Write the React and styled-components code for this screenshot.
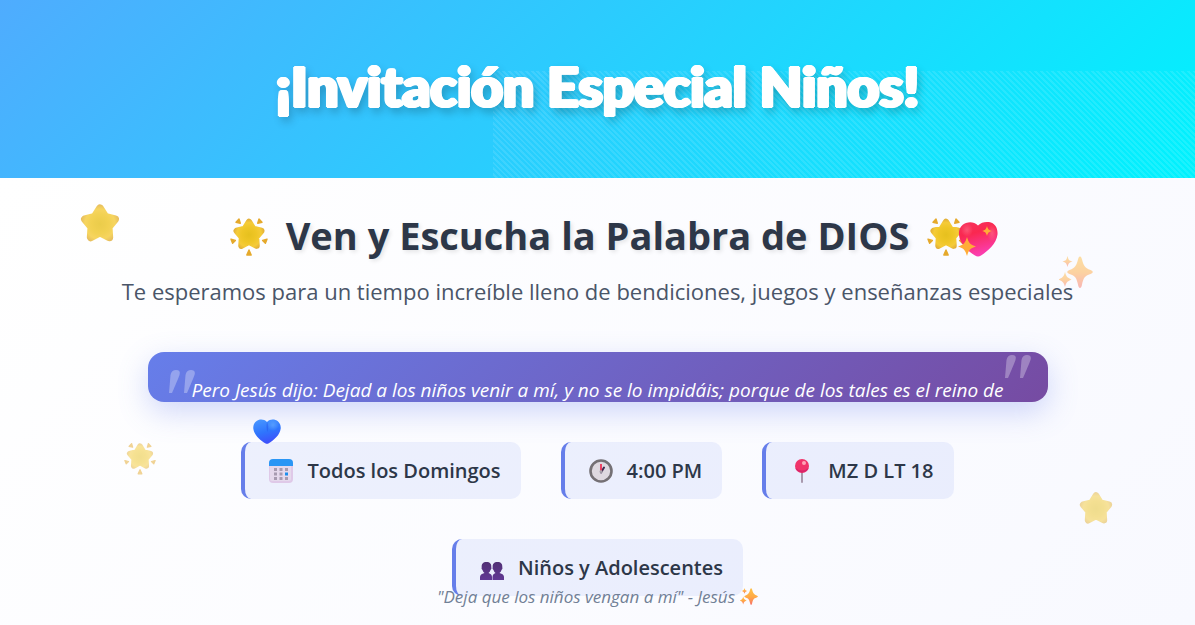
import React from "react";
import styled, { createGlobalStyle } from "styled-components";

const GlobalStyle = createGlobalStyle`
  *, *::before, *::after { box-sizing: border-box; }
  body {
    margin: 0;
    font-family: "Open Sans", "Noto Sans", sans-serif;
    color: #2d3748;
  }
  h1, h2, p, ul, blockquote { margin: 0; padding: 0; }
  svg { display: block; }
`;

const Page = styled.div`
  min-height: 100vh;
  display: flex;
  flex-direction: column;
  overflow: hidden;
`;

const Header = styled.header`
  position: relative;
  overflow: hidden;
  padding: 46px 32px 52px;
  text-align: center;
  background: linear-gradient(135deg, #4facfe 0%, #00f2fe 100%);

  &::before {
    content: "";
    position: absolute;
    inset: 40% 0 0 41.25%;
    background: repeating-linear-gradient(
      45deg,
      transparent,
      transparent 2px,
      rgba(255, 255, 255, 0.1) 2px,
      rgba(255, 255, 255, 0.1) 4px
    );
  }
`;

const Title = styled.h1`
  position: relative;
  font-family: Lato, "Open Sans", sans-serif;
  font-size: 55px;
  line-height: 80px;
  font-weight: 900;
  color: #fff;
  text-shadow:
    2px 0 #fff, -2px 0 #fff, 0 1px #fff, 0 -1px #fff,
    1px 1px #fff, -1px -1px #fff, 1px -1px #fff, -1px 1px #fff,
    3px 5px 10px rgba(0, 0, 0, 0.3);
`;

const Content = styled.main`
  position: relative;
  flex: 1;
  padding: 30px 40px 29px;
  text-align: center;
  background: linear-gradient(135deg, #ffffff 0%, #f8f9ff 100%);
`;

const Heading = styled.h2`
  display: flex;
  justify-content: center;
  align-items: center;
  gap: 18px;
  font-size: 38px;
  line-height: 54px;
  font-weight: 700;
  text-shadow: 2px 2px 4px rgba(0, 0, 0, 0.1);
`;

const Subtitle = styled.p`
  margin-top: 13px;
  font-size: 22px;
  line-height: 32px;
  color: #4a5568;
`;

const Verse = styled.blockquote`
  position: relative;
  max-width: 900px;
  height: 50px;
  margin: 45px auto 40px;
  border-radius: 16px;
  background: linear-gradient(135deg, #667eea 0%, #764ba2 100%);
  box-shadow: 0 10px 30px rgba(102, 126, 234, 0.3);
`;

const VerseText = styled.p`
  height: 50px;
  padding: 23px 40px 0;
  overflow: hidden;
  font-size: 19px;
  line-height: 30px;
  font-style: italic;
  color: #fff;
`;

const QuoteMark = styled.svg`
  position: absolute;
  fill: rgba(255, 255, 255, 0.3);
  ${(p) => (p.$closing ? "top: 3px; right: 17px;" : "top: 18px; left: 21px;")}
`;

const Details = styled.ul`
  display: flex;
  flex-wrap: wrap;
  justify-content: center;
  gap: 40px;
  max-width: 900px;
  margin: 0 auto;
  list-style: none;
`;

const Detail = styled.li`
  display: flex;
  align-items: center;
  gap: 14px;
  padding: 12px 20px 12px 24px;
  border-left: 4px solid #667eea;
  border-radius: 10px;
  background: rgba(102, 126, 234, 0.1);
  font-size: 20px;
  line-height: 33px;
  font-weight: 600;
`;

const Closing = styled.p`
  position: absolute;
  left: 0;
  right: 0;
  bottom: 16px;
  display: flex;
  justify-content: center;
  align-items: center;
  gap: 5px;
  font-size: 17px;
  line-height: 24px;
  font-style: italic;
  color: #718096;
`;

const Floating = styled.span`
  position: absolute;
  left: ${(p) => p.$left};
  top: ${(p) => p.$top};
  opacity: ${(p) => p.$opacity};
`;

const STAR = "M20 6 25 14 34.3 16.4 28.2 23.7 28.8 33.6 20 29 11.2 33.6 11.8 23.7 5.7 16.4 15 14Z";

function StarShape({ id }) {
  return (
    <>
      <defs>
        <radialGradient id={id} gradientUnits="userSpaceOnUse" cx="20" cy="21" r="19">
          <stop offset="0" stopColor="#e6c01e" />
          <stop offset="0.45" stopColor="#efc626" />
          <stop offset="0.75" stopColor="#f5cb38" />
          <stop offset="1" stopColor="#dfab38" />
        </radialGradient>
      </defs>
      <path d={STAR} fill={`url(#${id})`} stroke={`url(#${id})`} strokeWidth="7.4" strokeLinejoin="round" />
    </>
  );
}

function Star({ id, size }) {
  return (
    <svg width={size} height={size} viewBox="1 1 38 38" aria-hidden="true">
      <StarShape id={id} />
    </svg>
  );
}

function GlowingStar({ id, size }) {
  return (
    <svg width={size} height={size} viewBox="0 -2 38 38" overflow="visible" aria-hidden="true">
      <g transform="translate(1.800 -1.200) scale(0.86)">
        <StarShape id={id} />
      </g>
      <g fill="#e5a92c" stroke="#e5a92c" strokeWidth="1.4" strokeLinejoin="round">
        <path d="M9 1 10.300 5.300 6 4.300Z" />
        <path d="M29 1 27.700 5.300 32 4.300Z" />
        <path d="M1 21.200 5.400 22.400 2.600 25.200Z" />
        <path d="M37 21.200 32.600 22.400 35.400 25.200Z" />
        <path d="M19 32 21.200 37 16.800 37Z" />
      </g>
    </svg>
  );
}

function Sparkles({ id, size }) {
  return (
    <svg width={size} height={size} viewBox="0 0 34 34" aria-hidden="true">
      <defs>
        <linearGradient id={id} x1="0" y1="0" x2="0" y2="1">
          <stop offset="0" stopColor="#ffc24a" />
          <stop offset="0.5" stopColor="#ffab45" />
          <stop offset="1" stopColor="#f8746c" />
        </linearGradient>
      </defs>
      <g fill={`url(#${id})`}>
        <path d="M21 0.500C22.200 0.500 22.600 2 23 3.500C24.500 9 25.500 12 31.500 14C34.500 15 34.500 17 31.500 18C25.500 20 24.500 22 23 28.500C22.500 33 19.500 33 19 28.500C17.500 22 16.500 20 10.500 18C7.500 17 7.500 15 10.500 14C16.500 12 17.500 9 19 3.500C19.400 2 19.800 0.500 21 0.500Z" />
        <path d="M8.500 0C9.500 4 10 4.500 13.500 5.500C10 6.500 9.500 7.500 8.500 11C7.500 7.500 7 6.500 3.500 5.500C7 4.500 7.500 4 8.500 0Z" />
        <path d="M6 16C7.200 20.500 8 21.500 12.500 23.500C8 25.500 7.200 26.500 6 31C4.800 26.500 4 25.500 -0.500 23.500C4 21.500 4.800 20.500 6 16Z" />
      </g>
    </svg>
  );
}

function SparklingHeart() {
  return (
    <svg width="40" height="36" viewBox="0 0 40 36" aria-hidden="true">
      <defs>
        <linearGradient id="pinkHeart" x1="0" y1="0" x2="0.3" y2="1">
          <stop offset="0" stopColor="#f7325d" />
          <stop offset="0.4" stopColor="#fa2850" />
          <stop offset="1" stopColor="#fb3dae" />
        </linearGradient>
        <radialGradient id="pinkShine">
          <stop offset="0" stopColor="#ff7d93" stopOpacity="0.5" />
          <stop offset="1" stopColor="#ff7d93" stopOpacity="0" />
        </radialGradient>
      </defs>
      <path d="M20 4.500C16.500 1 12 .500 8 2C2.500 4 .500 9 1 14C1.800 23 10 30 17 34.500Q20 36.500 23 34.500C30 30 38.500 22.500 39.500 13.500C40 7 37 2 31 1C26.500 .500 23 1.500 20 4.500Z" fill="url(#pinkHeart)" />
      <ellipse cx="9" cy="9" rx="6" ry="7" fill="url(#pinkShine)" />
      <ellipse cx="34" cy="12" rx="5" ry="9" fill="url(#pinkShine)" />
      <g fill="#ffac38">
        <path d="M29 5C30 8.500 30.700 9 34 10C30.700 11 30 11.500 29 15C28 11.500 27.300 11 24 10C27.300 9 28 8.500 29 5Z" />
        <path d="M9 16C10.700 22 12 23.500 18 25.500C12 27.500 10.700 29 9 35C7.300 29 6 27.500 0 25.500C6 23.500 7.300 22 9 16Z" />
      </g>
    </svg>
  );
}

function BlueHeart() {
  return (
    <svg width="28" height="25" viewBox="0 0 28 25" aria-hidden="true">
      <defs>
        <linearGradient id="blueHeart" x1="0.3" y1="0" x2="0.6" y2="1">
          <stop offset="0" stopColor="#4694ff" />
          <stop offset="0.5" stopColor="#2f75fd" />
          <stop offset="1" stopColor="#3f4bfb" />
        </linearGradient>
        <radialGradient id="blueShine">
          <stop offset="0" stopColor="#69b0ff" stopOpacity="0.6" />
          <stop offset="1" stopColor="#69b0ff" stopOpacity="0" />
        </radialGradient>
      </defs>
      <path d="M14 3C11.500 .500 8.500 0 5.500 1C1.500 2.500 0 6 .300 9.500C1 16 7 21 12.200 24.200Q14 25.500 15.800 24.200C21 21 27 16 27.700 9.500C28 6 26.500 2.500 22.500 1C19.500 0 16.500 .500 14 3Z" fill="url(#blueHeart)" />
      <path d="M14 3C15.500 6 15.500 9 14.300 13C13.300 9 13.300 6 14 3Z" fill="#2350e8" opacity="0.45" />
      <circle cx="20" cy="6" r="6" fill="url(#blueShine)" />
    </svg>
  );
}

function CalendarIcon() {
  const cells = [];
  for (let row = 0; row < 3; row++)
    for (let col = 0; col < 3; col++)
      cells.push(
        <rect key={row * 3 + col} x={5 + col * 5.5} y={9 + row * 4.5} width="3" height="3" fill={row === 1 && col === 2 ? "#1c8fee" : "#a79bb0"} />
      );
  return (
    <svg width="24" height="24" viewBox="0 0 24 24" aria-hidden="true">
      <rect x="0" y="1" width="24" height="23" rx="4" fill="#dfc9e8" />
      <rect x="1" y="5" width="21" height="17" rx="2" fill="#e5d9ec" />
      <path d="M0 7V4Q0 0 4 0H20Q24 0 24 4V7Z" fill="#2a96f5" />
      {cells}
    </svg>
  );
}

function ClockIcon() {
  return (
    <svg width="24" height="24" viewBox="0 0 24 24" aria-hidden="true">
      <circle cx="12" cy="12" r="10.500" fill="#ded9e0" stroke="#747074" strokeWidth="2.600" />
      <path d="M12 13.500 15 8.500" stroke="#3f2b50" strokeWidth="2" strokeLinecap="round" />
      <path d="M12 12V5" stroke="#ee3457" strokeWidth="1.800" />
      <circle cx="12" cy="12.500" r="1.500" fill="#aaa4ad" />
    </svg>
  );
}

function PinIcon() {
  return (
    <svg width="24" height="24" viewBox="0 0 24 24" aria-hidden="true">
      <rect x="11" y="12" width="2" height="12" rx="1" fill="#a899ad" />
      <circle cx="12" cy="7" r="7" fill="#f0346a" />
      <path d="M5.500 9A7 7 0 0 0 18.500 9Q12 14 5.500 9Z" fill="#d9246b" />
      <circle cx="14" cy="4" r="2" fill="#ffa3b6" />
    </svg>
  );
}

function PeopleIcon() {
  return (
    <svg width="24" height="26" viewBox="0 0 24 26" aria-hidden="true">
      <defs>
        <linearGradient id="people" x1="0" y1="0" x2="0" y2="1">
          <stop offset="0" stopColor="#523075" />
          <stop offset="1" stopColor="#613894" />
        </linearGradient>
      </defs>
      <g fill="url(#people)">
        <path d="M6.500 7C10 7 11.500 9 11.300 12Q12 14 10.500 15Q10 17 8.500 18Q12 19 12 22V25H0V22Q0 19 4.500 18Q3 17 2.500 15Q1 14 1.700 12C1.500 9 3 7 6.500 7Z" />
        <path d="M17.500 7C21 7 22.500 9 22.300 12Q23 14 21.500 15Q21 17 19.500 18Q24 19 24 22V25H12.500V22Q12.500 19 15.500 18Q14 17 13.500 15Q12 14 12.700 12C12.500 9 14 7 17.500 7Z" />
      </g>
    </svg>
  );
}

function VerseMark({ closing }) {
  return (
    <QuoteMark $closing={closing} width="26" height="24" viewBox="0 0 26 24" aria-hidden="true">
      <path d="M1.500 5Q2.500 0 7 0Q12 0 10.500 5Q9.500 8 3 23H0Z" />
      <path d="M16.500 5Q17.500 0 22 0Q27 0 25.500 5Q24.500 8 18 23H15Z" />
    </QuoteMark>
  );
}

const details = [
  { icon: CalendarIcon, label: "Todos los Domingos" },
  { icon: ClockIcon, label: "4:00 PM" },
  { icon: PinIcon, label: "MZ D LT 18" },
  { icon: PeopleIcon, label: "Niños y Adolescentes" },
];

export default function App() {
  return (
    <Page>
      <GlobalStyle />
      <Header>
        <Title>¡Invitación Especial Niños!</Title>
      </Header>
      <Content>
        <Heading>
          <GlowingStar id="headStart" size={38} />
          <span>Ven y Escucha la Palabra de DIOS</span>
          <GlowingStar id="headEnd" size={38} />
        </Heading>
        <Subtitle>Te esperamos para un tiempo increíble lleno de bendiciones, juegos y enseñanzas especiales</Subtitle>
        <Verse>
          <VerseMark />
          <VerseText>Pero Jesús dijo: Dejad a los niños venir a mí, y no se lo impidáis; porque de los tales es el reino de</VerseText>
          <VerseMark closing />
        </Verse>
        <Details>
          {details.map(({ icon: Icon, label }) => (
            <Detail key={label}>
              <Icon />
              <span>{label}</span>
            </Detail>
          ))}
        </Details>
        <Closing>
          <span>"Deja que los niños vengan a mí" - Jesús</span>
          <Sparkles id="closingSpark" size={18} />
        </Closing>
        <Floating $left="6.7%" $top="25px" $opacity={0.8}><Star id="starA" size={40} /></Floating>
        <Floating $left="88.6%" $top="78px" $opacity={0.5}><Sparkles id="sparkA" size={34} /></Floating>
        <Floating $left="10.4%" $top="263px" $opacity={0.5}><GlowingStar id="starB" size={32} /></Floating>
        <Floating $left="90.3%" $top="313px" $opacity={0.5}><Star id="starC" size={34} /></Floating>
        <Floating $left="80.2%" $top="43px" $opacity={1}><SparklingHeart /></Floating>
        <Floating $left="21.2%" $top="241px" $opacity={1}><BlueHeart /></Floating>
      </Content>
    </Page>
  );
}
